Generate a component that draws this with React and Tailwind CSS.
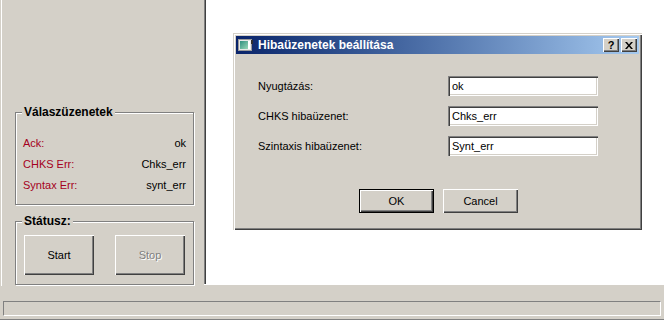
import React from 'react';

// classic win9x style bevels
const raised = 'shadow-[inset_1px_1px_0_#ffffff,inset_-1px_-1px_0_#404040,inset_-2px_-2px_0_#808080]';
const sunken = 'shadow-[inset_1px_1px_0_#808080,inset_2px_2px_0_#404040,inset_-1px_-1px_0_#ffffff,inset_-2px_-2px_0_#d4d0c8]';
const etched = 'border border-[#808080] shadow-[1px_1px_0_#ffffff,inset_1px_1px_0_#ffffff]';

const GroupBox = ({ title, className, children }) => (
  <div className={`relative ${etched} ${className}`}>
    <span className="absolute left-[6px] top-[-8px] bg-[#d4d0c8] px-[2px] text-[12px] font-bold leading-[14px] text-black">
      {title}
    </span>
    {children}
  </div>
);

const Field = ({ label, value }) => (
  <div className="flex h-[20px] items-center">
    <span className="w-[190px] text-black">{label}</span>
    <div className={`flex h-[20px] w-[150px] items-center bg-white pl-[4px] ${sunken}`}>
      <span className="text-black">{value}</span>
    </div>
  </div>
);

const WinIcon = () => (
  <svg width="15" height="12" viewBox="0 0 15 12">
    <defs>
      <linearGradient id="ic" x1="0" y1="0" x2="1" y2="1">
        <stop offset="0" stopColor="#2f8f7f" />
        <stop offset="1" stopColor="#9ad8b8" />
      </linearGradient>
    </defs>
    <rect x="0.5" y="0.5" width="13" height="11" fill="#e8e8e8" stroke="#9a9a9a" />
    <rect x="2" y="2" width="8" height="8" fill="url(#ic)" />
    <rect x="10" y="2" width="2" height="8" fill="#ffffff" />
    <rect x="13" y="1" width="2" height="4" fill="#303030" />
  </svg>
);

const CaptionButton = ({ children }) => (
  <div className={`flex h-[14px] w-[16px] items-center justify-center bg-[#d4d0c8] ${raised}`}>
    {children}
  </div>
);

const App = () => {
  return (
    <div className="flex h-[320px] w-[664px] flex-col overflow-hidden border-b border-[#808080] bg-[#d4d0c8] font-['Liberation_Sans',Arial,sans-serif] text-[11px] leading-[13px]">
      <div className="flex items-start">
        {/* left dock */}
        <div className="h-[286px] w-[204px] shrink-0 pt-[112px] pl-[15px] shadow-[inset_1px_0_0_#d4d0c8,inset_2px_0_0_#ffffff]">
          <GroupBox title="Válaszüzenetek" className="h-[93px] w-[179px]">
            <div className="flex flex-col gap-px pt-[20px] pl-[7px] pr-[7px]">
              {[
                ['Ack:', 'ok'],
                ['CHKS Err:', 'Chks_err'],
                ['Syntax Err:', 'synt_err'],
              ].map(([k, v]) => (
                <div key={k} className="flex h-[20px] items-center justify-between">
                  <span className="text-[#a50021]">{k}</span>
                  <span className="text-black">{v}</span>
                </div>
              ))}
            </div>
          </GroupBox>
          <GroupBox title="Státusz:" className="mt-[16px] h-[64px] w-[179px]">
            <div className="flex justify-between pt-[13px] pl-[8px] pr-[8px]">
              <button className={`h-[40px] w-[70px] bg-[#d4d0c8] text-[11px] text-black ${raised}`}>Start</button>
              <button className={`h-[40px] w-[70px] bg-[#d4d0c8] text-[11px] text-[#808080] [text-shadow:1px_1px_0_#ffffff] ${raised}`}>
                Stop
              </button>
            </div>
          </GroupBox>
        </div>

        {/* mdi area */}
        <div className="h-[285px] flex-1 border-b border-[#ffffff] bg-white pt-[33px] pl-[29px] shadow-[inset_1px_0_0_#808080,inset_2px_0_0_#404040]">
          <div className="flex h-[197px] w-[409px] flex-col bg-[#d4d0c8] p-[3px] shadow-[inset_1px_1px_0_#d4d0c8,inset_2px_2px_0_#ffffff,inset_-1px_-1px_0_#404040,inset_-2px_-2px_0_#808080]">
            <div className="flex h-[18px] items-center bg-gradient-to-r from-[#0a246a] to-[#a6caf0] pl-[2px] pr-[2px]">
              <WinIcon />
              <span className="ml-[5px] text-[12px] font-bold text-white">Hibaüzenetek beállítása</span>
              <div className="ml-auto flex gap-[2px]">
                <CaptionButton>
                  <span className="text-[11px] font-bold leading-none text-black">?</span>
                </CaptionButton>
                <CaptionButton>
                  <svg width="8" height="7" viewBox="0 0 8 7">
                    <path d="M0 0h2l2 2.5L6 0h2L5 3.5 8 7H6L4 4.5 2 7H0l3-3.5z" fill="#000" />
                  </svg>
                </CaptionButton>
              </div>
            </div>
            <div className="flex flex-col gap-[10px] pt-[22px] pl-[22px]">
              <Field label="Nyugtázás:" value="ok" />
              <Field label="CHKS hibaüzenet:" value="Chks_err" />
              <Field label="Szintaxis hibaüzenet:" value="Synt_err" />
            </div>
            <div className="mt-[33px] flex justify-center gap-[9px] pl-[2px]">
              <button className={`h-[24px] w-[75px] border border-black bg-[#d4d0c8] text-[11px] text-black ${raised}`}>OK</button>
              <button className={`h-[24px] w-[75px] bg-[#d4d0c8] text-[11px] text-black ${raised}`}>Cancel</button>
            </div>
          </div>
        </div>
      </div>

      {/* status bar */}
      <div className="mx-[3px] mt-[15px] h-[15px] border border-t-[#808080] border-l-[#808080] border-b-white border-r-white" />
    </div>
  );
};

export default App;
